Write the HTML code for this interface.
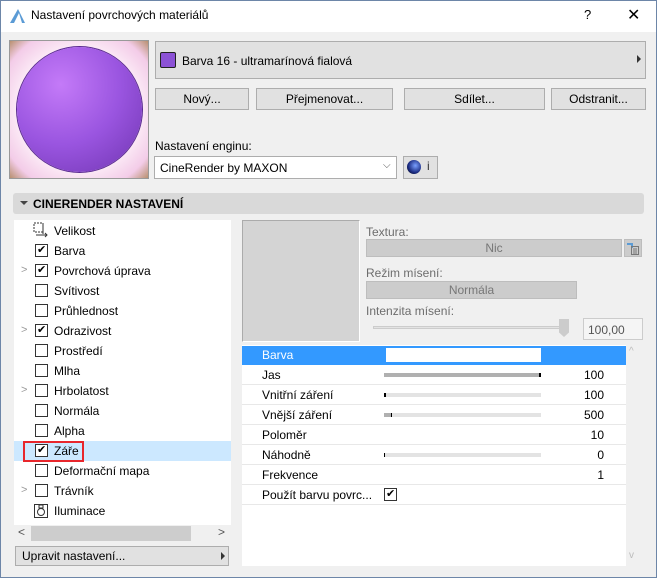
<!DOCTYPE html>
<html><head><meta charset="utf-8"><style>
*{box-sizing:border-box;margin:0;padding:0}
body{width:657px;height:578px;overflow:hidden;background:#f0f0f0;font-family:"Liberation Sans",sans-serif;font-size:12px;color:#000;position:relative}
.a{position:absolute}
.win{left:0;top:0;width:657px;height:578px;border:1px solid #6d86a8}
.title{left:1px;top:1px;width:655px;height:31px;background:#fff}
.btn{position:absolute;background:#e1e1e1;border:1px solid #adadad;text-align:center;line-height:20px}
.cb{position:absolute;width:13px;height:13px;border:1px solid #333;background:#fff}
.ck{position:absolute;font-size:11px;line-height:11px}
.li{position:absolute;left:54px;font-size:12px}
.arr{position:absolute;left:21px;color:#999;font-size:11px}
.row{position:absolute;left:242px;width:384px;height:20px;border-bottom:1px solid #e8e8e8}
.row .t{position:absolute;left:20px;top:3px}
.row .v{position:absolute;right:22px;top:3px}
.sl{position:absolute;left:142px;top:8px;width:157px;height:4px;background:#e3e3e3}
.lbl{color:#6d6d6d}
</style></head><body>
<div class="a win"></div>
<div class="a title"></div>
<svg class="a" style="left:9px;top:8px" width="17" height="16"><path d="M1 15 L9 1 L16 15 Z" fill="#5b9bd5"/><path d="M5 15 L10 5 L13 15Z" fill="#fff"/></svg>
<div class="a" style="left:31px;top:8px;font-size:12px">Nastavení povrchových materiálů</div>
<div class="a" style="left:584px;top:7px;font-size:13px">?</div>
<div class="a" style="left:627px;top:5px;font-size:16px">✕</div>

<div class="a" style="left:9px;top:40px;width:140px;height:139px;border:1px solid #999;overflow:hidden;background:
radial-gradient(circle at 50% 50%,#fff 55%,#fbe8f5 65%,#f3cce8 85%,#b89070 100%)">
<div class="a" style="left:7px;top:6px;width:125px;height:125px;border-radius:50%;background:radial-gradient(circle at 35% 30%,#c47af8 0%,#9a55e0 50%,#6f34b0 100%);box-shadow:0 0 0 1px #5a2a90"></div>
</div>

<div class="a" style="left:155px;top:41px;width:491px;height:38px;background:#e1e1e1;border:1px solid #adadad"></div>
<div class="a" style="left:160px;top:52px;width:16px;height:16px;background:#8c52d6;border:1px solid #222;border-radius:2px"></div>
<div class="a" style="left:182px;top:54px">Barva 16 - ultramarínová fialová</div>
<div class="a" style="left:637px;top:55px;width:0;height:0;border-left:4px solid #333;border-top:4px solid transparent;border-bottom:4px solid transparent"></div>

<div class="btn" style="left:155px;top:88px;width:94px;height:22px">Nový...</div>
<div class="btn" style="left:256px;top:88px;width:137px;height:22px">Přejmenovat...</div>
<div class="btn" style="left:404px;top:88px;width:141px;height:22px">Sdílet...</div>
<div class="btn" style="left:551px;top:88px;width:95px;height:22px">Odstranit...</div>

<div class="a" style="left:155px;top:139px">Nastavení enginu:</div>
<div class="a" style="left:154px;top:156px;width:243px;height:23px;background:#fff;border:1px solid #adadad;padding:4px 0 0 5px">CineRender by MAXON</div>
<div class="a" style="left:383px;top:160px;color:#555;font-size:10px">⌵</div>
<div class="btn" style="left:403px;top:156px;width:35px;height:23px"></div>
<div class="a" style="left:407px;top:160px;width:14px;height:14px;border-radius:50%;background:radial-gradient(circle at 60% 40%,#7aa0ff,#1a2a80 60%,#000)"></div>
<div class="a" style="left:427px;top:159px;font-size:12px;color:#333">i</div>

<div class="a" style="left:13px;top:193px;width:631px;height:21px;background:#d9d9d9;border-radius:3px"></div>
<div class="a" style="left:20px;top:201px;width:0;height:0;border-top:4px solid #444;border-left:4px solid transparent;border-right:4px solid transparent"></div>
<div class="a" style="left:33px;top:197px;font-weight:bold;font-size:12px">CINERENDER NASTAVENÍ</div>

<div class="a" style="left:14px;top:220px;width:217px;height:305px;background:#fff"></div>
<div class="a" style="left:14px;top:441px;width:217px;height:20px;background:#cce8ff"></div>
<svg class="a" style="left:33px;top:222px" width="16" height="16"><rect x="1" y="1" width="9" height="9" fill="none" stroke="#333" stroke-dasharray="2 1"/><path d="M3 13h11M12 11l2 2-2 2M10 3v9" stroke="#333" fill="none"/></svg>
<div class="li" style="top:224px">Velikost</div>
<div class="cb" style="left:35px;top:244px"></div><div class="ck" style="left:37px;top:245px">✔</div><div class="li" style="top:244px">Barva</div>
<div class="arr" style="top:264px">&gt;</div><div class="cb" style="left:35px;top:264px"></div><div class="ck" style="left:37px;top:265px">✔</div><div class="li" style="top:264px">Povrchová úprava</div>
<div class="cb" style="left:35px;top:284px"></div><div class="li" style="top:284px">Svítivost</div>
<div class="cb" style="left:35px;top:304px"></div><div class="li" style="top:304px">Průhlednost</div>
<div class="arr" style="top:324px">&gt;</div><div class="cb" style="left:35px;top:324px"></div><div class="ck" style="left:37px;top:325px">✔</div><div class="li" style="top:324px">Odrazivost</div>
<div class="cb" style="left:35px;top:344px"></div><div class="li" style="top:344px">Prostředí</div>
<div class="cb" style="left:35px;top:364px"></div><div class="li" style="top:364px">Mlha</div>
<div class="arr" style="top:384px">&gt;</div><div class="cb" style="left:35px;top:384px"></div><div class="li" style="top:384px">Hrbolatost</div>
<div class="cb" style="left:35px;top:404px"></div><div class="li" style="top:404px">Normála</div>
<div class="cb" style="left:35px;top:424px"></div><div class="li" style="top:424px">Alpha</div>
<div class="a" style="left:23px;top:441px;width:61px;height:21px;border:2px solid #e8262b"></div>
<div class="cb" style="left:35px;top:444px"></div><div class="ck" style="left:37px;top:445px">✔</div><div class="li" style="top:444px">Záře</div>
<div class="cb" style="left:35px;top:464px"></div><div class="li" style="top:464px">Deformační mapa</div>
<div class="arr" style="top:484px">&gt;</div><div class="cb" style="left:35px;top:484px"></div><div class="li" style="top:484px">Trávník</div>
<svg class="a" style="left:34px;top:502px" width="15" height="16"><rect x="0.5" y="2.5" width="13" height="13" fill="none" stroke="#333"/><circle cx="7" cy="10" r="3.5" fill="none" stroke="#333"/><rect x="5" y="3" width="4" height="3" fill="none" stroke="#333"/></svg>
<div class="li" style="top:504px">Iluminace</div>
<div class="a" style="left:14px;top:525px;width:217px;height:17px;background:#f0f0f0"></div>
<div class="a" style="left:31px;top:526px;width:160px;height:15px;background:#cdcdcd"></div>
<div class="a" style="left:18px;top:525px;color:#555">&lt;</div>
<div class="a" style="left:218px;top:525px;color:#555">&gt;</div>
<div class="a" style="left:15px;top:546px;width:214px;height:20px;background:#e1e1e1;border:1px solid #adadad;padding:2px 0 0 6px">Upravit nastavení...</div>
<div class="a" style="left:221px;top:552px;width:0;height:0;border-left:4px solid #333;border-top:4px solid transparent;border-bottom:4px solid transparent"></div>

<div class="a" style="left:242px;top:220px;width:118px;height:122px;background:#d4d4d4;border:1px solid #ababab;border-right-color:#fff;border-bottom-color:#fff"></div>
<div class="a lbl" style="left:366px;top:225px">Textura:</div>
<div class="a" style="left:366px;top:239px;width:256px;height:18px;background:#cccccc;border:1px solid #bdbdbd;text-align:center;color:#777;line-height:16px">Nic</div>
<div class="a" style="left:624px;top:239px;width:18px;height:18px;background:#cccccc;border:1px solid #bdbdbd"></div>
<svg class="a" style="left:626px;top:241px" width="14" height="14"><path d="M1 3h5v4" stroke="#5b9bd5" stroke-width="2" fill="none"/><rect x="5.5" y="5.5" width="7" height="8" fill="none" stroke="#777"/><path d="M7 8h4M7 10h4M7 12h4" stroke="#777"/></svg>
<div class="a lbl" style="left:366px;top:266px">Režim mísení:</div>
<div class="a" style="left:366px;top:281px;width:211px;height:18px;background:#cccccc;border:1px solid #bdbdbd;text-align:center;color:#777;line-height:16px">Normála</div>
<div class="a lbl" style="left:366px;top:304px">Intenzita mísení:</div>
<div class="a" style="left:373px;top:326px;width:195px;height:3px;background:#e3e3e3;border:1px solid #ccc"></div>
<div class="a" style="left:559px;top:319px;width:10px;height:18px;background:#ccc;clip-path:polygon(0 0,100% 0,100% 75%,50% 100%,0 75%)"></div>
<div class="a" style="left:583px;top:318px;width:60px;height:22px;background:#f5f5f5;border:1px solid #ccc;padding:4px 0 0 4px;color:#555">100,00</div>

<div class="a" style="left:242px;top:345px;width:384px;height:221px;background:#fff"></div>
<div class="a" style="left:626px;top:345px;width:17px;height:221px;background:#f0f0f0"></div>
<div class="a" style="left:629px;top:346px;color:#bbb;font-size:10px">^</div>
<div class="a" style="left:629px;top:550px;color:#bbb;font-size:10px">v</div>
<div class="row" style="top:346px;height:19px;background:#3399ff;color:#fff;border:0"><span class="t" style="top:2px">Barva</span><div class="a" style="left:144px;top:2px;width:155px;height:14px;background:#fff"></div></div>
<div class="row" style="top:365px"><span class="t">Jas</span><div class="sl" style="background:#b0b0b0;border-right:2px solid #000"></div><span class="v">100</span></div>
<div class="row" style="top:385px"><span class="t">Vnitřní záření</span><div class="sl" style="border-left:2px solid #000"></div><span class="v">100</span></div>
<div class="row" style="top:405px"><span class="t">Vnější záření</span><div class="sl"><div class="a" style="left:0;top:0;width:8px;height:4px;background:#b0b0b0;border-right:1px solid #000"></div></div><span class="v">500</span></div>
<div class="row" style="top:425px"><span class="t">Poloměr</span><span class="v">10</span></div>
<div class="row" style="top:445px"><span class="t">Náhodně</span><div class="sl" style="border-left:1px solid #000"></div><span class="v">0</span></div>
<div class="row" style="top:465px"><span class="t">Frekvence</span><span class="v">1</span></div>
<div class="row" style="top:485px"><span class="t">Použít barvu povrc...</span><div class="cb" style="left:142px;top:3px"></div><div class="ck" style="left:144px;top:4px">✔</div></div>
</body></html>
